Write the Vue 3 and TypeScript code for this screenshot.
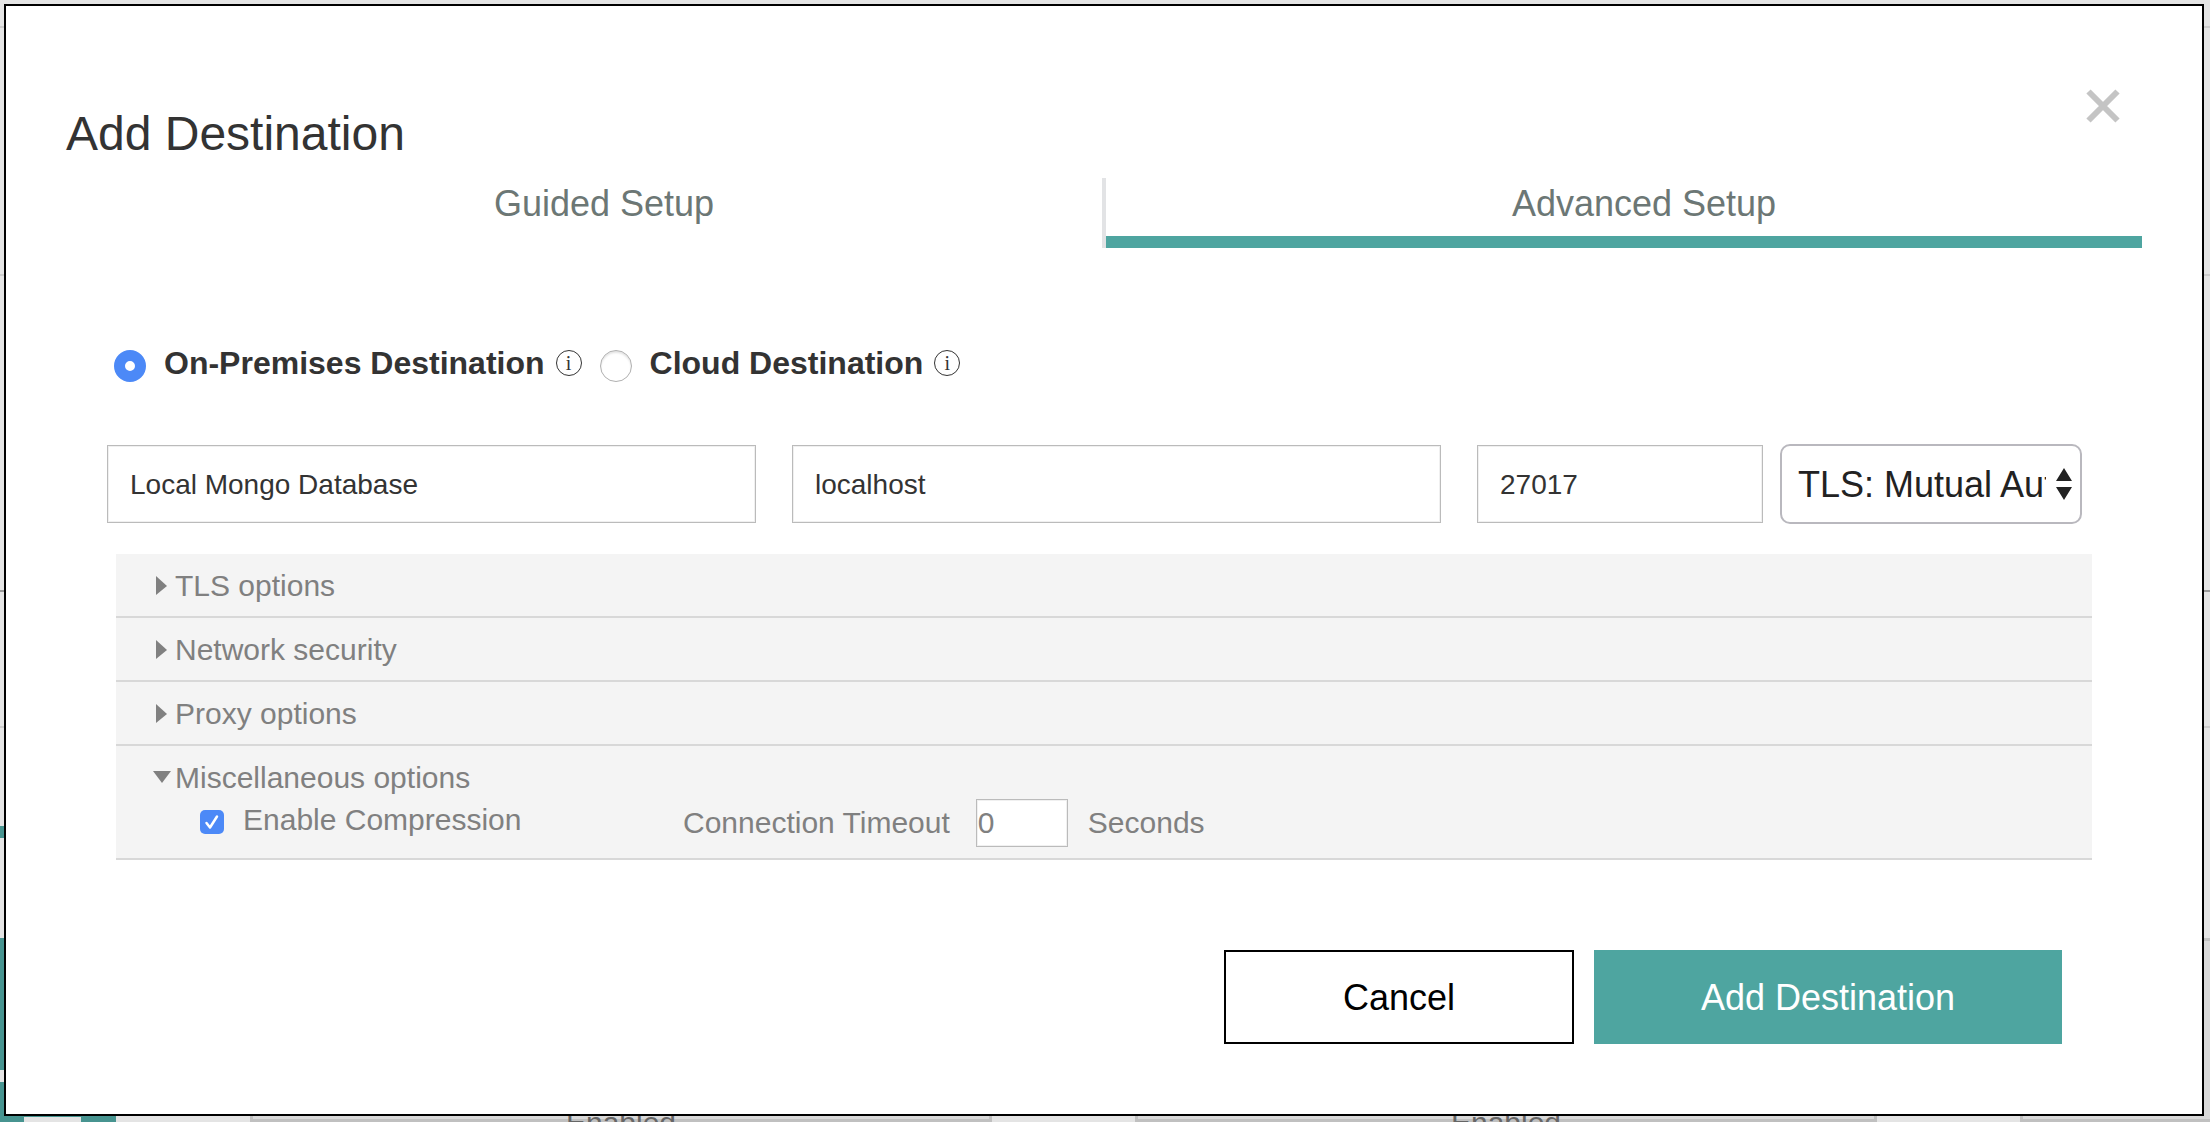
<script setup lang="ts">
import { ref } from 'vue'

interface Section {
  id: string
  title: string
  open: boolean
}

const tabs = ['Guided Setup', 'Advanced Setup']
const activeTab = ref('Advanced Setup')

const kinds = [
  { value: 'onprem', label: 'On-Premises Destination' },
  { value: 'cloud', label: 'Cloud Destination' },
]
const kind = ref('onprem')

const name = ref('Local Mongo Database')
const host = ref('localhost')
const port = ref('27017')
const tls = ref('mutual')
const compression = ref(true)
const timeout = ref('0')

const sections = ref<Section[]>([
  { id: 'tls', title: 'TLS options', open: false },
  { id: 'network', title: 'Network security', open: false },
  { id: 'proxy', title: 'Proxy options', open: false },
  { id: 'misc', title: 'Miscellaneous options', open: true },
])
</script>

<template>
  <div class="page">
    <div class="backdrop" aria-hidden="true">
      <div class="band band-a"></div>
      <div class="band band-b"></div>
      <div class="band band-c"></div>
      <div class="band band-d"></div>
      <div class="band band-e"><div class="accent"></div></div>
      <div class="cards">
        <div class="side">
          <div class="tile"></div>
          <div class="tile framed"><div class="hole"></div></div>
        </div>
        <div class="card">Enabled</div>
        <div class="card">Enabled</div>
        <div class="card last"></div>
      </div>
    </div>

    <section class="dialog" role="dialog" aria-labelledby="dialog-title">
      <button class="close" type="button" aria-label="Close">
        <svg width="34" height="34" viewBox="0 0 34 34">
          <path d="M2.5 2.5 31.5 31.5M31.5 2.5 2.5 31.5" stroke="#c4c4c4" stroke-width="6" fill="none" />
        </svg>
      </button>
      <h1 id="dialog-title">Add Destination</h1>

      <div class="tabs" role="tablist">
        <button
          v-for="tab in tabs"
          :key="tab"
          type="button"
          role="tab"
          class="tab"
          :class="{ active: tab === activeTab }"
          :aria-selected="tab === activeTab"
          @click="activeTab = tab"
        >{{ tab }}</button>
      </div>

      <form @submit.prevent>
        <div class="kinds">
          <div v-for="k in kinds" :key="k.value" class="kind">
            <input :id="k.value" v-model="kind" type="radio" name="kind" :value="k.value" />
            <label :for="k.value">{{ k.label }}</label>
            <span class="info">i</span>
          </div>
        </div>

        <div class="fields">
          <input v-model="name" class="field" type="text" aria-label="Destination name" />
          <input v-model="host" class="field" type="text" aria-label="Host" />
          <div class="port-tls">
            <input v-model="port" class="field" type="text" aria-label="Port" />
            <div class="select">
              <select v-model="tls" aria-label="TLS mode">
                <option value="mutual">TLS: Mutual Authentication</option>
              </select>
              <svg width="16" height="32" viewBox="0 0 16 32">
                <path d="M8 0 16 13H0ZM8 32 0 19H16Z" fill="#222" />
              </svg>
            </div>
          </div>
        </div>

        <div class="accordion">
          <div v-for="s in sections" :key="s.id" class="section" :class="{ open: s.open }">
            <button class="head" type="button" :aria-expanded="s.open" @click="s.open = !s.open">
              <svg width="18" height="20" viewBox="0 0 18 20">
                <path v-if="s.open" d="M0 3H18L9 15Z" fill="#808080" />
                <path v-else d="M3 0 14 10 3 19Z" fill="#808080" />
              </svg>
              <span>{{ s.title }}</span>
            </button>
            <div v-if="s.id === 'misc' && s.open" class="body">
              <div class="compression">
                <span class="check">
                  <input id="compression" v-model="compression" type="checkbox" />
                  <svg v-if="compression" width="24" height="24" viewBox="0 0 24 24">
                    <path d="M6.5 13 10 17.5 17 6.500" stroke="#fff" stroke-width="2.500" stroke-linecap="round" stroke-linejoin="round" fill="none" />
                  </svg>
                </span>
                <label for="compression">Enable Compression</label>
              </div>
              <div class="timeout">
                <label for="timeout">Connection Timeout</label>
                <input id="timeout" v-model="timeout" type="text" />
                <span>Seconds</span>
              </div>
            </div>
          </div>
        </div>

        <div class="actions">
          <button type="button" class="action cancel">Cancel</button>
          <button type="submit" class="action submit">Add Destination</button>
        </div>
      </form>
    </section>
  </div>
</template>

<style>
body {
  margin: 0;
}
</style>

<style scoped>
* {
  box-sizing: border-box;
}
.page {
  position: relative;
  min-height: 100vh;
  padding: 4px 6px 6px 4px;
  overflow: hidden;
  font-family: "Liberation Sans", Arial, sans-serif;
  color: #333;
}
button,
input,
select {
  margin: 0;
  font-family: inherit;
}
button {
  padding: 0;
  border: 0;
  background: none;
  cursor: pointer;
}
svg {
  display: block;
}

/* dimmed page under the dialog */
.backdrop {
  position: absolute;
  inset: 0;
  display: flex;
  flex-direction: column;
  background: #e4e4e4;
}
.band {
  flex: none;
  border-bottom: 2px solid #ccc;
}
.band-a { height: 28px; }
.band-b { height: 248px; }
.band-c { height: 316px; border-color: #999; }
.band-d { height: 136px; }
.band-e { height: 210px; padding-top: 98px; border: 0; }
.accent {
  width: 116px;
  height: 12px;
  background: #479490;
}
.cards {
  flex: 1;
  display: flex;
  gap: 143px;
  min-height: 0;
}
.side {
  flex: none;
  display: flex;
  flex-direction: column;
  gap: 12px;
  width: 116px;
  margin-right: -9px;
}
.tile {
  flex: none;
  height: 132px;
  background: #479490;
}
.framed {
  padding: 35px 35px 0 24px;
}
.hole {
  height: 97px;
  background: #e4e4e4;
}
.card {
  flex: 741;
  padding-top: 165px;
  border: 3px solid #c0c0c0;
  background: #d9d9d9;
  color: #666;
  font-size: 30px;
  line-height: 34px;
  text-align: center;
}
.last {
  flex: 0 0 741px;
  margin-right: -551px;
}

.dialog {
  position: relative;
  padding: 104px 60px 70px;
  border: 2px solid #000;
  background: #fff;
}
.close {
  position: absolute;
  top: 83px;
  right: 82px;
}
h1 {
  margin: 0 0 20px;
  font-size: 48px;
  font-weight: 400;
  line-height: 48px;
}

.tabs {
  display: flex;
}
.tab {
  flex: 1;
  height: 70px;
  padding: 0 0 6px 40px;
  border-bottom: 12px solid transparent;
  color: #6c7775;
  font-size: 36px;
  line-height: 52px;
}
.tab:first-child {
  border: 0;
  border-right: 4px solid #e2e3e5;
  padding-bottom: 18px;
}
.tab.active {
  border-bottom-color: #4ea5a0;
}

form {
  padding: 102px 60px 0 41px;
}
.kinds {
  display: flex;
  gap: 18px;
  padding-left: 7px;
}
.kind {
  display: flex;
  align-items: flex-start;
  height: 32px;
}
.kind input {
  appearance: none;
  width: 32px;
  height: 32px;
  border: 1px solid #b0b0b0;
  border-radius: 50%;
  background: #fff;
  box-shadow: inset 0 2px 2px #e4e4e4;
}
.kind input:checked {
  border: 11px solid #4c89f7;
  box-shadow: none;
}
.kind label {
  margin: 0 11px 0 18px;
  font-size: 32px;
  font-weight: 700;
  line-height: 26px;
}
.info {
  width: 26px;
  height: 26px;
  border: 1px solid #333;
  border-radius: 50%;
  font-family: "Liberation Serif", serif;
  font-size: 20px;
  line-height: 24px;
  text-align: center;
}

.fields {
  display: flex;
  align-items: center;
  gap: 36px;
  margin-top: 62px;
}
.field {
  flex: 1;
  min-width: 0;
  height: 78px;
  padding: 2px 22px 0;
  border: 1px solid #bbb;
  border-radius: 0;
  background: #fff;
  box-shadow: inset 0 0 0 1px #f0f0f0;
  color: #333;
  font-size: 28px;
}
.port-tls {
  flex: none;
  display: flex;
  align-items: center;
  gap: 17px;
  width: 605px;
}
.select {
  position: relative;
  width: 302px;
}
.select select {
  appearance: none;
  display: block;
  width: 100%;
  height: 80px;
  padding: 0 34px 0 16px;
  border: 2px solid #b9b8be;
  border-radius: 10px;
  background: #fff;
  color: #222;
  font-size: 36px;
}
.select svg {
  position: absolute;
  top: 24px;
  right: 10px;
  pointer-events: none;
}

.accordion {
  margin: 30px -10px 0 9px;
  color: #808080;
  font-size: 30px;
  line-height: 34px;
}
.section {
  border-bottom: 2px solid #d8d8d8;
  background: #f4f4f4;
}
.head {
  display: flex;
  align-items: center;
  gap: 4px;
  width: 100%;
  padding: 15px 37px 13px;
  color: inherit;
  font-size: inherit;
  line-height: inherit;
}
.open .head {
  padding-bottom: 3px;
}
.body {
  display: flex;
  padding: 1px 0 11px 84px;
}
.compression {
  display: flex;
  align-items: center;
  gap: 19px;
  width: 483px;
  height: 42px;
}
.check {
  display: grid;
  padding-top: 4px;
}
.check > * {
  grid-area: 1 / 1;
}
.check svg {
  pointer-events: none;
}
.check input {
  appearance: none;
  width: 24px;
  height: 24px;
  border-radius: 5px;
  background: #fff;
}
.check input:checked {
  background: #4c89f7;
}
.timeout {
  display: flex;
  align-items: center;
}
.timeout input {
  width: 92px;
  height: 48px;
  margin: 0 20px 0 26px;
  padding: 0 1px;
  border: 1px solid #bbb;
  border-radius: 0;
  background: #fff;
  box-shadow: inset 0 0 0 1px #f0f0f0;
  color: inherit;
  font-size: 30px;
}

.actions {
  display: flex;
  justify-content: flex-end;
  gap: 20px;
  margin: 90px 20px 0 0;
}
.action {
  height: 94px;
  padding-top: 2px;
  font-size: 36px;
}
.cancel {
  width: 350px;
  border: 2px solid #000;
  background: #fff;
  color: #000;
}
.submit {
  width: 468px;
  background: #4ea5a0;
  color: #fff;
}
</style>
